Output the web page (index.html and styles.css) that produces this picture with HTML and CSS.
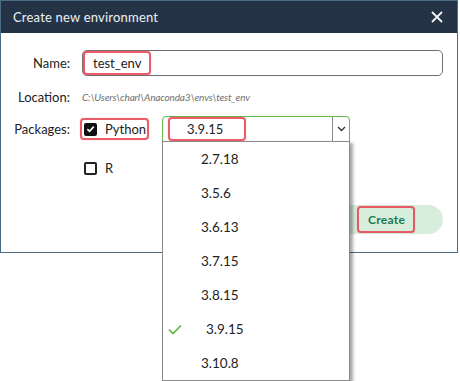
FILE: index.html
```html
<!DOCTYPE html>
<html lang="en">
<head>
  <meta charset="UTF-8" />
  <meta name="viewport" content="width=device-width, initial-scale=1.0" />
  <title>Create new environment</title>
  <link rel="stylesheet" href="styles.css">
</head>
<body>
  <div class="dialog">
    <div class="title-bar">
      <span class="title">Create new environment</span>
      <svg class="close" width="12" height="12" viewBox="0 0 12 12">
        <path d="M1 1 L11 11 M11 1 L1 11" stroke="#f2f4f6" stroke-width="1.8" fill="none" />
      </svg>
    </div>

    <div class="form">
      <div class="row row-name">
        <label>Name:</label>
        <div class="field"><span class="hl">test_env</span></div>
      </div>

      <div class="row row-location">
        <label>Location:</label>
        <span class="path">C:\Users\charl\Anaconda3\envs\test_env</span>
      </div>

      <div class="row row-packages">
        <label>Packages:</label>
        <div class="packages">
          <div class="hl check-item">
            <span class="box checked">
              <svg width="10" height="10" viewBox="0 0 10 10">
                <path d="M1.5 5.2 L4 7.6 L8.6 2.4" stroke="#fff" stroke-width="1.8" fill="none" />
              </svg>
            </span>
            <span>Python</span>
          </div>

          <div class="select">
            <span class="hl value">3.9.15</span>
            <span class="arrow">
              <svg width="9" height="6" viewBox="0 0 9 6">
                <path d="M1 1 L4.5 4.5 L8 1" stroke="#333" stroke-width="1.4" fill="none" />
              </svg>
            </span>
          </div>
        </div>
      </div>

      <div class="row row-r">
        <span></span>
        <div class="check-item plain">
          <span class="box"></span>
          <span>R</span>
        </div>
      </div>

      <div class="actions">
        <button class="create"><span class="hl">Create</span></button>
      </div>
    </div>
  </div>

  <ul class="options">
    <li>2.7.18</li>
    <li>3.5.6</li>
    <li>3.6.13</li>
    <li>3.7.15</li>
    <li>3.8.15</li>
    <li class="selected">
      <svg class="tick" width="14" height="11" viewBox="0 0 14 11">
        <path d="M1 5.5 L5 9.5 L13 1.5" stroke="#5bb645" stroke-width="1.6" fill="none" />
      </svg>
      3.9.15
    </li>
    <li>3.10.8</li>
  </ul>
</body>
</html>
```

FILE: styles.css
```css
* {
  box-sizing: border-box;
  margin: 0;
  padding: 0;
}
body {
  position: relative;
  height: 381px;
  background-color: #fff;
  font-family: Lato, "Open Sans", sans-serif;
  font-size: 13px;
  color: #222;
}
.dialog {
  width: 458px;
  height: 253px;
  border: 1px solid #4b6e86;
  background: #fff;
}
.title-bar {
  height: 32px;
  background-color: #243446;
  color: #eef1f4;
  display: flex;
  align-items: center;
  justify-content: space-between;
  padding: 0 14px 0 12px;
}
.title {
  font-size: 13px;
  letter-spacing: 0.2px;
}
.form {
  padding: 17px 14px 0 0;
}
.row {
  display: grid;
  grid-template-columns: 69px 1fr;
  column-gap: 12px;
  align-items: center;
}
.row label {
  text-align: right;
  color: #222;
}
.row-name .field {
  height: 26px;
  border: 1px solid #707070;
  border-radius: 5px;
  display: flex;
  align-items: center;
}
.row-name .hl {
  height: 24px;
  line-height: 20px;
  padding: 0 8px;
}
.hl {
  border: 2px solid rgba(232, 64, 78, 0.85);
  border-radius: 4px;
  box-shadow: 0 0 1px rgba(232, 64, 78, 0.6);
}
.row-location {
  margin-top: 11px;
  height: 20px;
}
.path {
  font-style: italic;
  font-size: 10px;
  letter-spacing: -0.15px;
  color: #6f6f6f;
}
.row-packages {
  margin-top: 9px;
  height: 26px;
}
.packages {
  display: flex;
  align-items: center;
}
.check-item {
  display: flex;
  align-items: center;
  gap: 8px;
}
.packages .check-item {
  margin-left: -2px;
  height: 22px;
  width: 69px;
  padding-left: 2px;
}
.box {
  width: 13px;
  height: 13px;
  border: 2px solid #222;
  border-radius: 2px;
  display: flex;
  align-items: center;
  justify-content: center;
}
.box.checked {
  background: #111;
  border-color: #111;
}
.select {
  margin-left: 13px;
  width: 188px;
  height: 26px;
  border: 1px solid #66b54b;
  border-radius: 4px 4px 0 0;
  display: flex;
  align-items: center;
}
.select .value {
  margin-left: 5px;
  height: 24px;
  line-height: 20px;
  padding: 0 21px 0 17px;
}
.arrow {
  margin-left: auto;
  width: 17px;
  height: 24px;
  border-left: 1px solid #888;
  display: flex;
  align-items: center;
  justify-content: center;
}
/* open dropdown list, drawn over the dialog */
.options {
  position: absolute;
  left: 162px;
  top: 141px;
  width: 188px;
  height: 240px;
  list-style: none;
  background: #fff;
  border: 1px solid #8a8a8a;
  box-shadow: 3px 2px 3px rgba(0, 0, 0, 0.35);
}
.options li {
  position: relative;
  height: 34px;
  line-height: 34px;
  padding-left: 38px;
  font-size: 13.5px;
  color: #222;
}
.options li.selected {
  padding-left: 43px;
}
.tick {
  position: absolute;
  left: 5px;
  top: 12px;
}
.row-r {
  margin-top: 16px;
  height: 20px;
}
.plain {
  padding-left: 2px;
}
.actions {
  margin-top: 27px;
  display: flex;
  justify-content: flex-end;
}
.create {
  width: 112px;
  height: 29px;
  border: none;
  border-radius: 0 15px 15px 0;
  background: #d8eedc;
  font-family: Lato, "Open Sans", sans-serif;
  font-size: 12px;
  font-weight: bold;
  color: #1a7a4c;
  display: flex;
  align-items: center;
  padding-left: 26px;
}
.create .hl {
  height: 27px;
  line-height: 23px;
  padding: 0 8px 0 9px;
  letter-spacing: 0.3px;
}
```
